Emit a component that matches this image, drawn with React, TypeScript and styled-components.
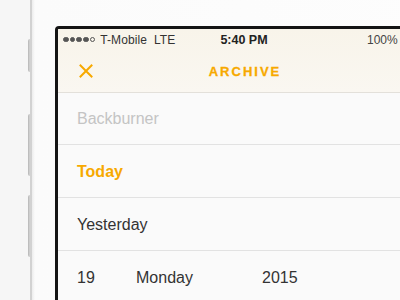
import React from 'react'
import styled, { createGlobalStyle } from 'styled-components'

const GlobalStyle = createGlobalStyle`
  html, body {
    margin: 0;
    padding: 0;
    background: #f6f6f6;
  }
  body {
    font-family: "Liberation Sans", Arial, sans-serif;
    -webkit-font-smoothing: antialiased;
  }
`

const accent = '#f7a900'

const Page = styled.div`
  width: 400px;
  height: 300px;
  overflow: hidden;
  display: flex;
  padding-left: 30px;
  box-sizing: border-box;
`

const PhoneBody = styled.div`
  position: relative;
  flex: none;
  width: 420px;
  height: 300px;
  box-sizing: border-box;
  border-left: 2px solid #d2d2d2;
  background: linear-gradient(to right, #ececec 0, #fbfbfb 3px, #fdfdfd 100%);
  padding: 26px 0 0 23px;
`

const SideButton = styled.div<{ $top: number; $height: number }>`
  position: absolute;
  left: -4px;
  top: ${p => p.$top}px;
  height: ${p => p.$height}px;
  width: 2px;
  border-radius: 2px 0 0 2px;
  background: linear-gradient(to right, #b5b5b5, #d6d6d6);
`

const Bezel = styled.div`
  width: 380px;
  height: 280px;
  box-sizing: border-box;
  border-top: 3px solid #141414;
  border-left: 3px solid #141414;
  border-top-left-radius: 4px;
  background: #fafafa;
  overflow: hidden;
`

const Screen = styled.div`
  width: 372px;
  display: flex;
  flex-direction: column;
`

const Header = styled.div`
  background: linear-gradient(to bottom, #f8f4ea, #faf7f1);
  border-bottom: 1px solid #e3e0da;
`

const StatusBar = styled.div`
  height: 21px;
  display: flex;
  align-items: center;
  padding: 0 0 0 5px;
  font-size: 12px;
  color: #333;
  position: relative;
`

const Signal = styled.div`
  display: flex;
  gap: 1.2px;
  margin-right: 5px;
`

const Dot = styled.span<{ $filled: boolean }>`
  width: 5.5px;
  height: 5.5px;
  border-radius: 50%;
  box-sizing: border-box;
  border: 1px solid #555;
  background: ${p => (p.$filled ? '#555' : 'transparent')};
`

const Carrier = styled.span`
  flex: 1;
  letter-spacing: 0.1px;
`

const Clock = styled.span`
  position: absolute;
  left: 0;
  right: 0;
  text-align: center;
  font-weight: bold;
  font-size: 12.5px;
  color: #222;
`

const Battery = styled.span`
  width: 63px;
  color: #444;
`

const NavBar = styled.div`
  height: 42px;
  display: flex;
  align-items: center;
  position: relative;
  padding-left: 21px;
`

const CloseButton = styled.button`
  border: none;
  background: none;
  padding: 0;
  width: 14px;
  height: 14px;
  display: flex;
  cursor: pointer;
`

const Title = styled.div`
  position: absolute;
  left: 0;
  right: 0;
  text-align: center;
  color: ${accent};
  font-weight: bold;
  font-size: 13px;
  letter-spacing: 2px;
  padding-left: 2px;
  -webkit-text-stroke: 0.3px ${accent};
`

const Row = styled.div<{ $tone: 'muted' | 'active' | 'normal' }>`
  height: 51px;
  display: flex;
  align-items: center;
  padding-left: 19px;
  border-bottom: 1px solid #e2e2e2;
  font-size: 16px;
  color: ${p => (p.$tone === 'muted' ? '#c4c4c4' : p.$tone === 'active' ? accent : '#333')};
  font-weight: ${p => (p.$tone === 'active' ? 'bold' : 'normal')};
  padding-top: ${p => (p.$tone === 'muted' ? 0 : 1)}px;
`

const Cell = styled.span<{ $width: number }>`
  width: ${p => p.$width}px;
  flex: none;
`

const CloseIcon = () => (
  <svg width="14" height="14" viewBox="0 0 14 14">
    <path d="M1.5 1.5 L12.5 12.5 M12.5 1.5 L1.5 12.5" stroke={accent} strokeWidth="2" strokeLinecap="square" />
  </svg>
)

export default function App() {
  return (
    <>
      <GlobalStyle />
      <Page>
        <PhoneBody>
          <SideButton $top={39} $height={33} />
          <SideButton $top={114} $height={62} />
          <SideButton $top={195} $height={62} />
          <Bezel>
            <Screen>
              <Header>
                <StatusBar>
                  <Signal>
                    {[true, true, true, true, false].map((f, i) => (
                      <Dot key={i} $filled={f} />
                    ))}
                  </Signal>
                  <Carrier>T-Mobile&nbsp;&nbsp;LTE</Carrier>
                  <Clock>5:40 PM</Clock>
                  <Battery>100%</Battery>
                </StatusBar>
                <NavBar>
                  <CloseButton aria-label="Close">
                    <CloseIcon />
                  </CloseButton>
                  <Title>ARCHIVE</Title>
                </NavBar>
              </Header>
              <Row $tone="muted">Backburner</Row>
              <Row $tone="active">Today</Row>
              <Row $tone="normal">Yesterday</Row>
              <Row $tone="normal">
                <Cell $width={59}>19</Cell>
                <Cell $width={126}>Monday</Cell>
                <Cell $width={60}>2015</Cell>
              </Row>
            </Screen>
          </Bezel>
        </PhoneBody>
      </Page>
    </>
  )
}
